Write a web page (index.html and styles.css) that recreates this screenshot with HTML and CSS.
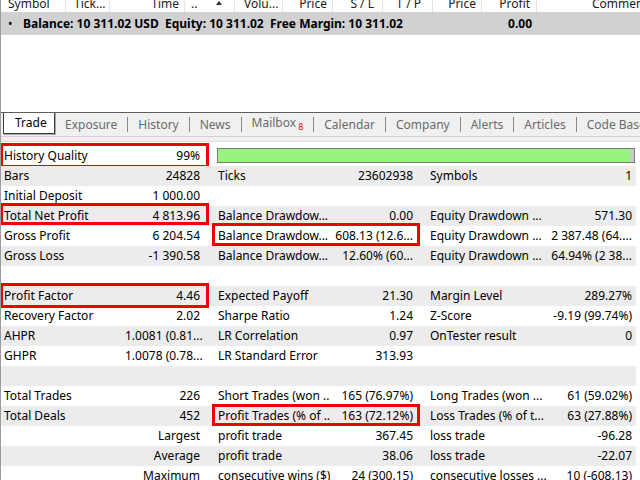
FILE: index.html
```html
<!DOCTYPE html>
<html lang="en">
<head>
    <meta charset="UTF-8">
    <meta name="viewport" content="width=device-width, initial-scale=1.0">
    <title>Tester Report</title>
    <link rel="stylesheet" href="styles.css">
</head>
<body>
    <!-- Trade list -->
    <div id="tradePanel">
        <div class="cols">
            <div class="col c-symbol">Symbol</div>
            <div class="col c-tick">Tick...</div>
            <div class="col c-time">Time</div>
            <div class="col c-type">..<span class="sort"></span></div>
            <div class="col c-volume">Volu...</div>
            <div class="col c-price">Price</div>
            <div class="col c-sl">S / L</div>
            <div class="col c-tp">T / P</div>
            <div class="col c-price2">Price</div>
            <div class="col c-profit">Profit</div>
            <div class="col c-comment">Comment</div>
        </div>
        <div class="balance">
            <span class="bullet">•</span>
            <span class="summary">Balance: 10 311.02 USD&nbsp; Equity: 10 311.02&nbsp; Free Margin: 10 311.02</span>
            <span class="total">0.00</span>
        </div>
    </div>

    <!-- Tabs -->
    <div id="tabs">
        <div class="tab active">Trade</div>
        <div class="tab">Exposure</div><span class="sep"></span>
        <div class="tab">History</div><span class="sep"></span>
        <div class="tab">News</div><span class="sep"></span>
        <div class="tab">Mailbox<span class="badge">8</span></div><span class="sep"></span>
        <div class="tab">Calendar</div><span class="sep"></span>
        <div class="tab">Company</div><span class="sep"></span>
        <div class="tab">Alerts</div><span class="sep"></span>
        <div class="tab">Articles</div><span class="sep"></span>
        <div class="tab">Code Base</div>
    </div>
    <div class="divider"></div>

    <!-- Backtest results -->
    <div id="report">
        <div class="row">
            <div>History Quality</div><div>99%</div>
            <div class="quality"><div class="quality-fill" style="width: 99%"></div></div>
            <span class="mark mark-left hq"></span>
        </div>
        <div class="row">
            <div>Bars</div><div>24828</div>
            <div>Ticks</div><div>23602938</div>
            <div>Symbols</div><div>1</div>
        </div>
        <div class="row">
            <div>Initial Deposit</div><div>1 000.00</div>
            <div></div><div></div><div></div><div></div>
        </div>
        <div class="row">
            <div>Total Net Profit</div><div>4 813.96</div>
            <div>Balance Drawdow...</div><div>0.00</div>
            <div>Equity Drawdown ...</div><div>571.30</div>
            <span class="mark mark-left tnp"></span>
        </div>
        <div class="row">
            <div>Gross Profit</div><div>6 204.54</div>
            <div>Balance Drawdow...</div><div>608.13 (12.6...</div>
            <div>Equity Drawdown ...</div><div>2 387.48 (64....</div>
            <span class="mark mark-mid bdd"></span>
        </div>
        <div class="row">
            <div>Gross Loss</div><div>-1 390.58</div>
            <div>Balance Drawdow...</div><div>12.60% (60...</div>
            <div>Equity Drawdown ...</div><div>64.94% (2 38...</div>
        </div>
        <div class="row">
            <div></div><div></div><div></div><div></div><div></div><div></div>
        </div>
        <div class="row">
            <div>Profit Factor</div><div>4.46</div>
            <div>Expected Payoff</div><div>21.30</div>
            <div>Margin Level</div><div>289.27%</div>
            <span class="mark mark-left pf"></span>
        </div>
        <div class="row">
            <div>Recovery Factor</div><div>2.02</div>
            <div>Sharpe Ratio</div><div>1.24</div>
            <div>Z-Score</div><div>-9.19 (99.74%)</div>
        </div>
        <div class="row">
            <div>AHPR</div><div>1.0081 (0.81...</div>
            <div>LR Correlation</div><div>0.97</div>
            <div>OnTester result</div><div>0</div>
        </div>
        <div class="row">
            <div>GHPR</div><div>1.0078 (0.78...</div>
            <div>LR Standard Error</div><div>313.93</div>
            <div></div><div></div>
        </div>
        <div class="row">
            <div></div><div></div><div></div><div></div><div></div><div></div>
        </div>
        <div class="row">
            <div>Total Trades</div><div>226</div>
            <div>Short Trades (won ...</div><div>165 (76.97%)</div>
            <div>Long Trades (won ...</div><div>61 (59.02%)</div>
        </div>
        <div class="row">
            <div>Total Deals</div><div>452</div>
            <div>Profit Trades (% of ...</div><div>163 (72.12%)</div>
            <div>Loss Trades (% of t...</div><div>63 (27.88%)</div>
            <span class="mark mark-mid ptr"></span>
        </div>
        <div class="row">
            <div></div><div>Largest</div>
            <div>profit trade</div><div>367.45</div>
            <div>loss trade</div><div>-96.28</div>
        </div>
        <div class="row">
            <div></div><div>Average</div>
            <div>profit trade</div><div>38.06</div>
            <div>loss trade</div><div>-22.07</div>
        </div>
        <div class="row">
            <div></div><div>Maximum</div>
            <div>consecutive wins ($)</div><div>24 (300.15)</div>
            <div>consecutive losses ...</div><div>10 (-608.13)</div>
        </div>
    </div>
</body>
</html>
```

FILE: styles.css
```css
    body {
        font-family: "Noto Sans", Arial, sans-serif;
        font-size: 12px;
        margin: 0;
        padding: 0;
        width: 640px;
        height: 480px;
        box-sizing: border-box;
        overflow: hidden;
        background-color: #ffffff;
        color: #000000;
        border-left: 1px solid #9c9c9c;
    }

    /* Lista de trades */
    #tradePanel {
        height: 112px;
    }

    .cols {
        display: flex;
        height: 12px;
        align-items: flex-end;
        overflow: hidden;
    }

    .col {
        flex: none;
        height: 16px;
        line-height: 16px;
        box-sizing: border-box;
        border-right: 1px solid #e4e4e4;
        white-space: nowrap;
        color: #1b1b1b;
    }

    .c-symbol { width: 65px; padding-left: 7px; }
    .c-tick { width: 44px; padding-left: 8px; }
    .c-time { width: 75px; text-align: right; padding-right: 5px; }
    .c-type { width: 50px; padding-left: 6px; position: relative; }
    .c-volume { width: 48px; padding-left: 9px; }
    .c-price { width: 50px; text-align: right; padding-right: 5px; }
    .c-sl { width: 50px; text-align: right; padding-right: 8px; }
    .c-tp { width: 50px; text-align: right; padding-right: 11px; }
    .c-price2 { width: 49px; text-align: right; padding-right: 5px; }
    .c-profit { width: 55px; text-align: right; padding-right: 6px; }
    .c-comment { width: 120px; padding-left: 55px; border-right: none; }

    .sort {
        position: absolute;
        left: 31px;
        top: 5px;
        border-left: 3px solid transparent;
        border-right: 3px solid transparent;
        border-bottom: 4px solid #2b2b2b;
    }

    .balance {
        display: flex;
        height: 23px;
        line-height: 23px;
        background-color: #d1d1d1;
        font-weight: bold;
        padding-left: 7px;
        padding-right: 108px;
        white-space: nowrap;
    }

    .bullet {
        width: 15px;
        font-weight: normal;
    }

    .summary {
        flex: 1;
    }

    .total {
        text-align: right;
    }

    /* Abas */
    #tabs {
        display: flex;
        align-items: center;
        height: 23px;
        border-top: 1px solid #5f5f5f;
        background-color: #f0f0f0;
        padding-left: 2px;
        white-space: nowrap;
        overflow: hidden;
    }

    .tab {
        flex: none;
        padding: 0 10px;
        color: #6b6b6b;
        line-height: 22px;
    }

    .tab.active {
        align-self: flex-start;
        height: 22px;
        width: 52px;
        box-sizing: border-box;
        padding: 0 0 0 11px;
        margin-top: -1px;
        background-color: #ffffff;
        color: #000000;
        border: 1px solid #3c3c3c;
        border-top: none;
        box-shadow: 1px 1px 0 #a8a8a8;
    }

    .sep {
        flex: none;
        width: 1px;
        height: 15px;
        background-color: #8a8a8a;
    }

    .badge {
        color: #e01010;
        font-size: 9px;
        margin-left: 2px;
        vertical-align: -3px;
    }

    .divider {
        height: 4px;
        border-top: 1px solid #d2d2d2;
        border-bottom: 1px solid #dcdcdc;
        background-color: #f0f0f0;
        margin-bottom: 4px;
    }

    /* Resultados */
    #report {
        width: 635px;
    }

    .row {
        position: relative;
        display: grid;
        grid-template-columns: 124px 80px 125px 88px 130px 88px;
        height: 20px;
        line-height: 20px;
    }

    .row:nth-child(even) {
        background-color: #ececec;
    }

    .row > div {
        white-space: nowrap;
        overflow: hidden;
        box-sizing: border-box;
    }

    .row > div:nth-child(1) { padding-left: 3px; }
    .row > div:nth-child(2) { text-align: right; padding-right: 5px; }
    .row > div:nth-child(3) { padding-left: 13px; }
    .row > div:nth-child(4) { text-align: right; padding-right: 5px; }
    .row > div:nth-child(5) { padding-left: 12px; }
    .row > div:nth-child(6) { text-align: right; padding-right: 4px; }

    .row > div.quality {
        grid-column: 3 / 7;
        height: 15px;
        margin: 2px 1px 0 12px;
        padding: 0;
        border: 1px solid #7a7a7a;
        background-color: #c9c9c9;
    }

    .quality-fill {
        height: 100%;
        background-color: #98f47f;
    }

    /* Marcações em vermelho */
    .mark {
        position: absolute;
        box-sizing: border-box;
        border: 3px solid #f00000;
    }

    .mark-left {
        left: -1px;
        width: 209px;
    }

    .mark-mid {
        left: 211px;
        width: 208px;
    }

    .hq { top: -3px; height: 25px; }
    .tnp { top: -3px; height: 22px; }
    .bdd { top: -3px; height: 23px; }
    .pf { top: -3px; height: 25px; }
    .ptr { top: -2px; height: 22px; }
```
